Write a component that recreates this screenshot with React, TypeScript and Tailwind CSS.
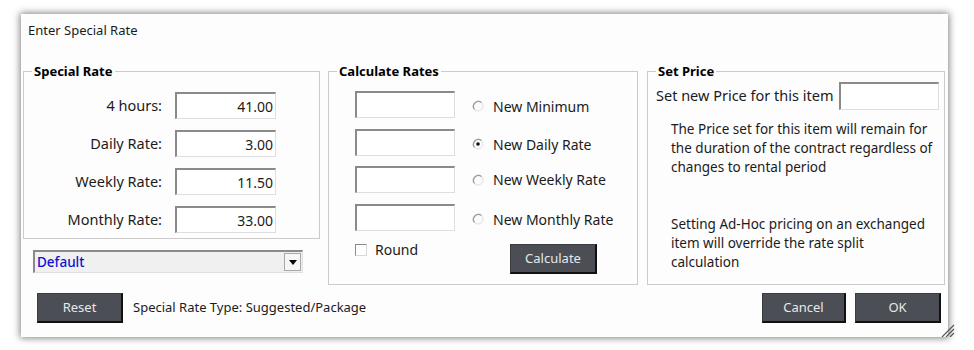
import React from "react";

const Group = ({ title, className, children }: { title: string; className: string; children?: React.ReactNode }) => (
  <div className={`relative border border-[#cbcbcb] ${className}`}>
    <span className="absolute -top-[10px] left-[8px] px-[2px] bg-[#fdfdfd] text-[13px] leading-[18px] font-bold text-black">
      {title}
    </span>
    {children}
  </div>
);

const Field = ({ value = "", className = "" }: { value?: string; className?: string }) => (
  <div
    className={`h-[27px] bg-white border-t-2 border-l-2 border-r border-b border-t-[#8a8a8a] border-l-[#8a8a8a] border-r-[#dedede] border-b-[#dedede] flex items-center justify-end pr-[2px] text-[14px] text-[#1b1b1b] ${className}`}
  >
    {value}
  </div>
);

const Radio = ({ checked = false }: { checked?: boolean }) => (
  <svg width="12" height="12" viewBox="0 0 12 12" className="shrink-0">
    <circle cx="6" cy="6" r="5" fill="#fbfbfb" stroke="#e0e0e0" strokeWidth="1" />
    <path d="M2.5 9.5 A5 5 0 0 1 9.5 2.5" fill="none" stroke="#9a9a9a" strokeWidth="1.2" />
    {checked && <circle cx="6" cy="6" r="1.8" fill="#111" />}
  </svg>
);

const WinButton = ({ label, className }: { label: string; className: string }) => (
  <div
    className={`h-[30px] bg-[#4b4e55] border border-[#3a3c40] border-r-2 border-b-2 border-r-[#111] border-b-[#111] flex items-center justify-center text-[13px] text-[#e8e8e8] ${className}`}
  >
    {label}
  </div>
);

const rates = [
  { label: "4 hours:", value: "41.00" },
  { label: "Daily Rate:", value: "3.00" },
  { label: "Weekly Rate:", value: "11.50" },
  { label: "Monthly Rate:", value: "33.00" },
];

const calcRows = [
  { label: "New Minimum", mt: "", pt: "pt-[3px]", checked: false },
  { label: "New Daily Rate", mt: "mt-[11px]", pt: "pt-[3px]", checked: true },
  { label: "New Weekly Rate", mt: "mt-[10px]", pt: "", checked: false },
  { label: "New Monthly Rate", mt: "mt-[11px]", pt: "pt-[3px]", checked: false },
];

export default function App() {
  return (
    <div className="w-[974px] h-[350px] bg-white pt-[14px] pl-[21px] font-['Noto_Sans',sans-serif] text-[#1b1b1b] overflow-hidden">
      <div className="relative w-[927px] h-[323px] bg-[#fdfdfd] shadow-[0_0_7px_1px_rgba(0,0,0,0.5)] flex flex-col">
        <div className="pl-[7px] pt-[8px] text-[13px] leading-[16px]">Enter Special Rate</div>

        <div className="mt-[33px] pl-[2px] flex items-start">
          {/* left column */}
          <div className="w-[297px] flex flex-col">
            <Group title="Special Rate" className="h-[168px] pt-[20px]">
              <div className="flex flex-col gap-[11px]">
                {rates.map((r) => (
                  <div key={r.label} className="flex items-center">
                    <span className="w-[138px] text-right text-[14.5px]">{r.label}</span>
                    <Field value={r.value} className="ml-[13px] w-[101px]" />
                  </div>
                ))}
              </div>
            </Group>
            <div className="mt-[11px] ml-[10px] w-[270px] h-[23px] bg-[#f0f0f0] border-t-2 border-l-2 border-r border-b border-t-[#8a8a8a] border-l-[#8a8a8a] border-r-[#e0e0e0] border-b-[#e0e0e0] flex items-center justify-between">
              <span className="pl-[2px] text-[13.5px] font-medium text-[#1010d0]">Default</span>
              <div className="mr-[1px] w-[17px] h-[18px] bg-[#f6f6f6] border border-[#a8a8a8] flex items-center justify-center">
                <svg width="8" height="5" viewBox="0 0 8 5">
                  <path d="M0 0 H8 L4 5 Z" fill="#000" />
                </svg>
              </div>
            </div>
          </div>

          {/* calculate rates */}
          <Group title="Calculate Rates" className="ml-[8px] w-[310px] h-[214px] pt-[19px] pl-[26px]">
            {calcRows.map((r) => (
              <div key={r.label} className={`flex items-center ${r.mt}`}>
                <Field className="w-[100px]" />
                <div className={`ml-[17px] ${r.pt} flex items-center gap-[9px] text-[14px]`}>
                  <Radio checked={r.checked} />
                  <span>{r.label}</span>
                </div>
              </div>
            ))}
            <div className="mt-[13px] flex items-start">
              <div className="w-[155px] flex items-center -mt-[1px]">
                <div className="w-[12px] h-[12px] bg-white border border-t-[#8a8a8a] border-l-[#8a8a8a] border-r-[#d8d8d8] border-b-[#d8d8d8]" />
                <span className="ml-[8px] text-[14px] leading-[14px]">Round</span>
              </div>
              <WinButton label="Calculate" className="w-[87px] h-[29px]" />
            </div>
          </Group>

          {/* set price */}
          <Group title="Set Price" className="ml-[9px] w-[298px] h-[214px] pt-[10px]">
            <div className="flex items-center justify-between pl-[8px] pr-[5px]">
              <span className="text-[14.5px]">Set new Price for this item</span>
              <Field className="w-[100px] h-[28px]" />
            </div>
            <p className="mt-[10px] pl-[23px] w-[285px] text-[13.5px] leading-[19px]">
              The Price set for this item will remain for the duration of the contract regardless of changes to rental period
            </p>
            <p className="mt-[38px] pl-[23px] w-[285px] text-[13.5px] leading-[19px]">
              Setting Ad-Hoc pricing on an exchanged item will override the rate split calculation
            </p>
          </Group>
        </div>

        <div className="mt-[8px] flex items-center">
          <WinButton label="Reset" className="ml-[16px] w-[86px]" />
          <span className="ml-[10px] text-[13px]">Special Rate Type: Suggested/Package</span>
          <WinButton label="Cancel" className="ml-auto w-[84px]" />
          <WinButton label="OK" className="ml-[9px] mr-[7px] w-[86px]" />
        </div>

        <svg className="absolute right-[-7px] bottom-[0px]" width="16" height="14" viewBox="0 0 16 14">
          <path d="M15 2 L3 14 M15 6 L7 14 M15 10 L11 14" stroke="#555" strokeWidth="1.2" />
        </svg>
      </div>
    </div>
  );
}
